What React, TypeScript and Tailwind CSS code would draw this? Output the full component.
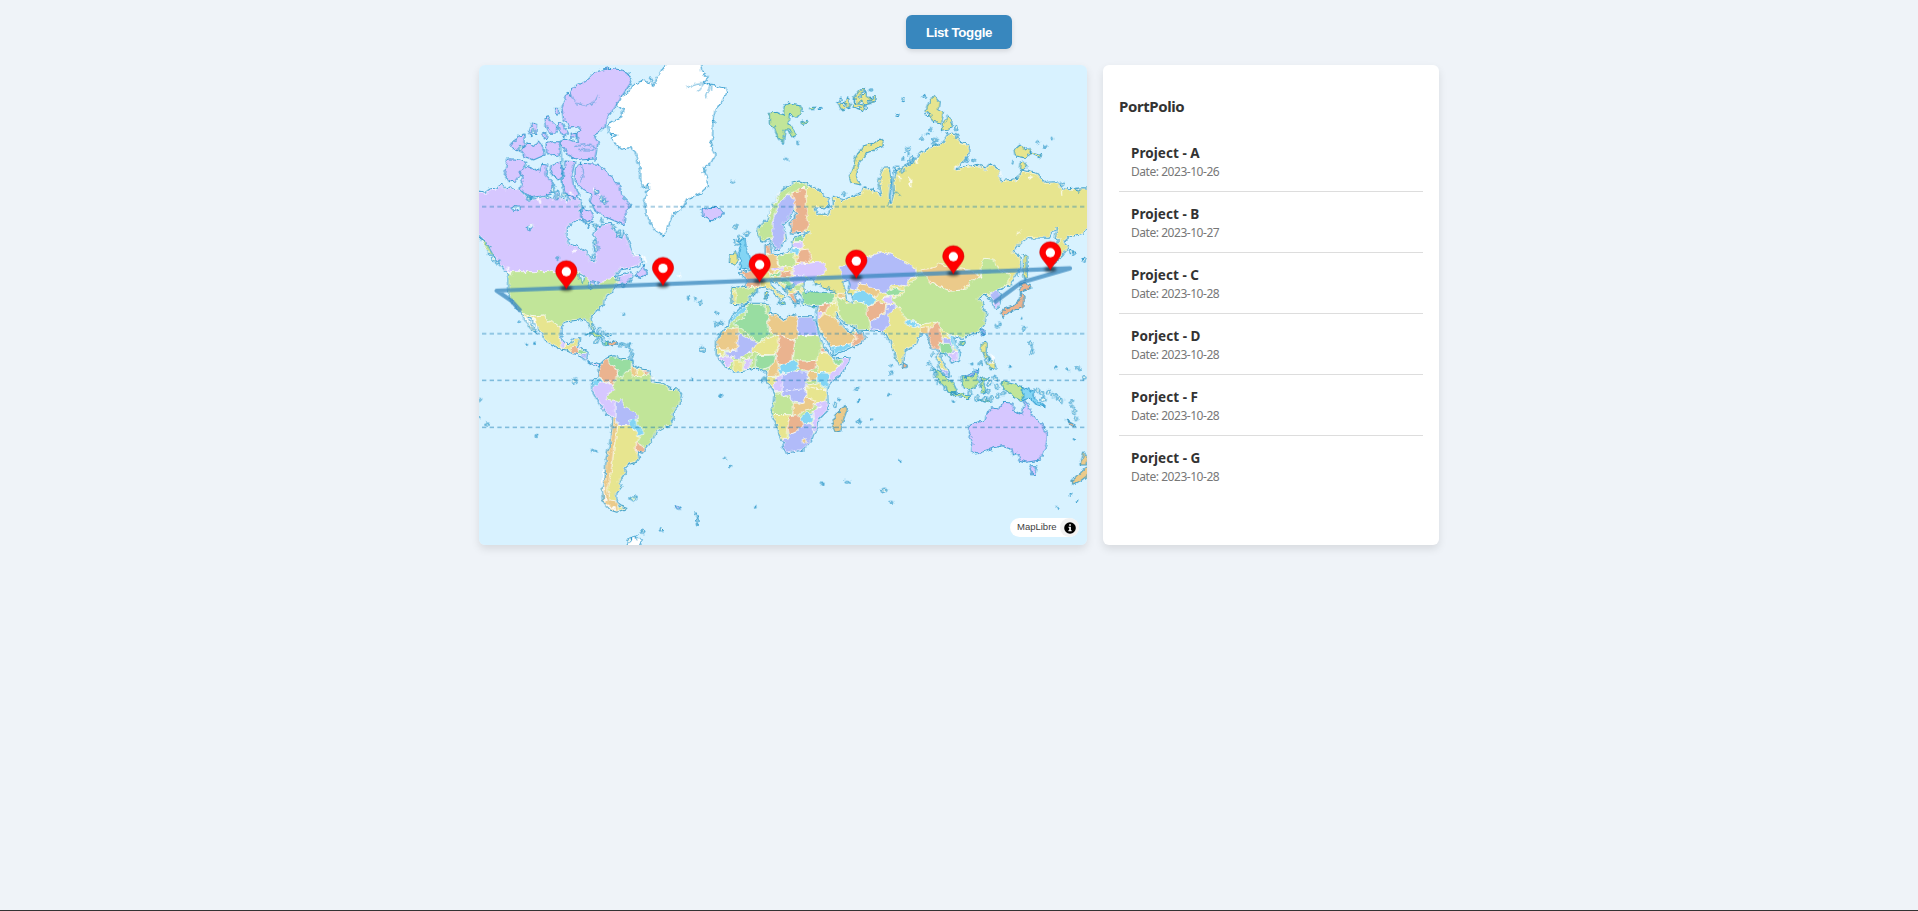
import React from "react";

const C = {
  water: "#D8F2FF",
  coast: "#198EC8",
  purple: "#D6C7FF",
  orange: "#EBCA8A",
  green: "#C1E599",
  yellow: "#E7E58F",
  mint: "#98DDA1",
  cyan: "#83D5F4",
  blue: "#B1BBF9",
  salmon: "#EAB38F",
};

type Shape = [string, string];
type Sheet = { x: number; y: number; shapes: Shape[] };

// Continental outlines, in map units (three units per CSS pixel).
const northAmerica =
  "10,405 45,412 60,402 75,400 95,387 105,402 115,400 120,392 130,403 150,405 160,415 175,430 195,432 215,425 232,425 250,430 262,405 275,430 290,440 300,415 320,425 335,440 330,470 345,490 370,498 355,515 335,492 312,500 292,520 290,545 300,568 325,575 350,590 362,615 372,620 378,595 370,575 378,555 368,540 385,512 420,505 440,535 455,550 462,525 480,570 488,595 510,605 517,622 500,635 478,640 450,645 435,665 462,658 485,650 490,665 470,685 440,690 430,705 428,712 412,720 402,735 400,750 385,765 368,780 362,790 370,815 372,830 362,825 355,805 345,792 325,795 305,798 285,802 273,820 272,840 280,860 300,867 312,848 332,848 328,865 322,877 345,885 354,892 350,912 360,925 378,922 390,928 385,936 365,930 345,918 335,902 305,895 290,885 270,882 240,865 225,858 222,845 205,825 190,802 180,785 172,788 180,805 195,825 203,838 185,825 172,805 160,785 152,770 135,755 120,730 113,705 113,670 115,658 95,635 75,610 60,585 45,560 20,535";
const southAmerica =
  "385,932 400,918 412,908 430,902 455,910 480,912 490,930 515,942 535,945 545,965 545,980 580,985 600,1000 625,1002 637,1020 630,1045 613,1065 612,1090 600,1112 580,1118 560,1130 550,1150 530,1175 520,1195 503,1190 508,1210 500,1222 478,1228 465,1240 470,1252 448,1280 455,1295 440,1315 440,1335 448,1352 470,1360 440,1372 420,1365 400,1340 397,1300 405,1270 408,1210 418,1170 425,1120 428,1088 405,1072 385,1040 365,1005 365,990 370,975 385,965 388,950";
const africa =
  "840,745 890,745 900,755 898,775 915,778 945,795 955,778 985,785 1030,785 1038,802 1045,835 1060,870 1070,885 1092,908 1100,912 1140,905 1135,925 1110,960 1080,985 1072,1005 1075,1065 1045,1095 1043,1122 1030,1140 1025,1155 1000,1185 975,1190 945,1195 935,1155 922,1130 918,1105 905,1080 910,1040 913,1015 890,980 885,970 890,955 875,945 855,940 825,948 795,952 765,935 750,915 738,895 740,850 755,830 775,810 780,790 800,770 815,755 830,748";
const eurasia =
  "868,555 862,520 890,495 900,470 915,440 935,405 965,385 990,378 1015,388 1045,405 1075,430 1080,450 1065,462 1035,458 1045,478 1072,478 1090,450 1088,420 1105,425 1115,440 1140,425 1175,412 1183,392 1192,405 1205,402 1222,412 1235,420 1225,380 1238,340 1260,338 1265,370 1258,420 1262,448 1270,420 1268,380 1278,345 1300,335 1330,320 1350,295 1385,275 1415,265 1435,235 1455,235 1470,262 1495,268 1500,290 1480,320 1455,342 1525,328 1545,342 1560,325 1588,345 1592,378 1645,370 1655,345 1700,355 1725,382 1760,380 1780,402 1840,398 1870,400 1870,510 1840,535 1800,545 1782,560 1795,575 1780,600 1755,625 1742,630 1735,600 1752,575 1768,555 1755,550 1762,520 1745,535 1735,550 1675,548 1650,565 1630,590 1650,605 1652,635 1640,660 1620,690 1600,700 1585,705 1593,720 1590,745 1583,762 1575,760 1568,745 1562,732 1545,720 1525,732 1542,745 1535,755 1550,775 1545,805 1530,830 1500,840 1475,850 1450,845 1462,875 1472,895 1465,915 1448,925 1440,912 1425,895 1410,890 1415,915 1435,945 1440,965 1425,960 1408,940 1400,915 1405,885 1390,885 1380,870 1372,840 1350,840 1340,865 1305,890 1300,925 1288,930 1275,905 1265,870 1255,850 1235,830 1200,827 1165,825 1150,815 1125,808 1110,790 1098,772 1100,788 1115,808 1135,830 1150,828 1158,815 1163,830 1182,832 1185,845 1175,865 1150,875 1120,890 1090,902 1085,885 1070,860 1050,830 1040,802 1040,770 1045,750 1030,752 1000,748 992,720 985,712 975,720 988,750 970,745 958,725 945,705 920,685 905,680 905,692 930,715 945,725 938,735 922,745 930,732 912,715 895,700 885,695 865,700 862,710 840,725 838,740 820,750 785,748 783,695 805,692 828,698 828,670 808,655 835,645 850,635 875,615 885,600 885,570 900,565 905,595 920,600 950,590 965,580 965,560 978,545 1000,540 1015,530 965,535 960,505 980,475 970,465 955,495 940,510 945,530 950,558 940,560 930,585 915,590 905,560 895,550 880,562";

const inlandWater =
  "M1000,695L1005,675 1025,670 1035,690 1050,685 1060,700 1090,705 1095,712 1060,712 1025,710 1005,712Z M1120,680L1135,672 1140,690 1135,710 1150,725 1145,742 1130,735 1125,710Z M325,655L345,665 340,680 330,672Z M355,680L365,678 362,705 356,700Z M370,680L385,685 378,695Z M120,460L145,452 150,465 130,470Z M165,520L190,508 180,525Z";

// Countries drawn inside the continental outlines.
const countries: Sheet[] = [
  {
    x: 0,
    y: 540,
    shapes: [
      [C.green, "100,110 325,110 345,125 370,150 385,150 428,125 440,125 445,150 450,300 350,300 270,275 245,260 235,262 220,240 195,243 155,235 100,180"],
      [C.yellow, "140,235 155,235 195,243 220,240 235,262 245,257 270,277 272,340 335,300 340,330 322,332 305,345 300,370 150,330"],
      [C.salmon, "305,338 318,332 325,352 312,362 300,352"],
      [C.mint, "322,345 345,340 360,352 335,358 322,355"],
      [C.blue, "330,358 356,350 352,382 338,378"],
      [C.salmon, "385,392 412,367 418,372 425,392 443,405 440,428 430,450 410,440 385,428 382,405"],
      [C.mint, "412,367 428,358 455,362 490,370 487,390 482,405 465,412 458,430 445,425 443,405 425,392"],
      [C.orange, "485,385 500,405 503,425 490,425 482,405"],
      [C.yellow, "500,400 522,400 522,420 503,425"],
      [C.salmon, "522,402 540,405 532,422 522,420"],
      [C.cyan, "360,440 385,428 398,438 385,455 370,462 360,455"],
    ],
  },
  {
    x: 0,
    y: 990,
    shapes: [
      [C.purple, "355,15 398,-12 430,0 430,15 408,30 412,45 435,50 435,95 428,100 400,90"],
      [C.blue, "435,55 455,43 462,62 490,80 502,95 500,108 475,118 445,122 435,95"],
      [C.cyan, "478,105 498,103 500,122 518,130 518,148 500,155 498,135 475,122"],
      [C.yellow, "445,122 475,120 500,138 500,155 512,155 500,175 500,200 520,240 480,400 450,380 420,345 410,310 425,250 432,180 440,140"],
      [C.orange, "425,95 438,98 442,130 432,180 425,250 412,310 420,345 440,348 445,378 440,390 390,380 390,200"],
      [C.salmon, "500,172 528,190 520,210 498,203"],
    ],
  },
  {
    x: 600,
    y: 540,
    shapes: [
      [C.cyan, "195,225 228,205 228,225 190,255 175,275 155,300 135,308 150,285"],
      [C.mint, "230,205 285,203 285,225 295,240 298,300 265,322 190,265 228,240"],
      [C.green, "285,200 305,200 302,238 295,245 285,228"],
      [C.orange, "295,240 312,233 345,255 360,235 382,240 382,318 325,298 298,290"],
      [C.blue, "382,240 440,240 448,302 382,302"],
      [C.orange, "135,315 160,285 203,278 203,345 150,345 138,340"],
      [C.blue, "203,290 260,325 260,345 235,350 210,375 170,360 168,348 203,345"],
      [C.yellow, "260,325 325,298 328,330 312,360 270,358 245,350"],
      [C.salmon, "325,298 375,318 368,375 340,390 320,385 315,360 328,335"],
      [C.green, "382,302 450,302 460,335 445,375 400,380 370,370 375,318"],
      [C.yellow, "135,340 165,348 165,360 140,362"],
      [C.purple, "145,365 185,362 190,380 170,395"],
      [C.yellow, "190,378 218,378 218,410 192,410"],
      [C.green, "210,370 235,350 247,358 235,372"],
      [C.purple, "222,375 245,370 240,405 222,405"],
      [C.mint, "258,362 315,360 318,375 300,395 275,405 255,398"],
      [C.orange, "318,368 328,400 325,420 290,422 300,395"],
      [C.cyan, "325,395 365,375 390,395 370,410 330,418"],
      [C.salmon, "382,378 440,378 435,400 415,412 390,400"],
      [C.salmon, "450,330 485,362 475,352 452,350"],
      [C.yellow, "452,352 480,355 490,375 510,390 480,415 450,412 436,385"],
      [C.mint, "488,370 520,372 515,388 498,388"],
      [C.purple, "520,372 545,360 540,400 480,450 478,415 510,392"],
      [C.cyan, "440,412 478,415 476,465 440,440"],
      [C.orange, "415,412 440,412 440,430 415,440"],
      [C.blue, "335,420 370,408 412,412 410,470 408,500 370,500 365,480 335,470"],
      [C.purple, "320,425 340,418 335,470 312,470 308,445"],
      [C.yellow, "285,425 320,425 308,460 290,445"],
      [C.yellow, "410,450 440,445 470,465 475,500 435,508 410,480"],
    ],
  },
  {
    x: 600,
    y: 990,
    shapes: [
      [C.green, "308,22 335,25 340,35 362,30 365,55 378,58 365,90 305,90 300,60"],
      [C.blue, "335,20 408,10 408,40 400,55 365,50 362,30 340,35"],
      [C.yellow, "410,5 470,15 470,52 435,55 410,38"],
      [C.purple, "435,55 480,45 480,85 445,140 430,140 428,80 445,75"],
      [C.orange, "370,58 402,55 405,38 435,45 430,70 405,75 385,92 368,88"],
      [C.cyan, "388,98 408,80 428,85 425,112 402,118"],
      [C.salmon, "358,95 385,92 402,118 380,140 358,150 352,125"],
      [C.yellow, "300,88 370,90 355,100 352,165 325,165 315,115"],
      [C.blue, "330,163 352,163 358,150 380,140 402,118 425,115 432,160 400,210 340,215"],
      [C.orange, "395,165 405,160 410,168 400,175"],
    ],
  },
  {
    x: 600,
    y: 0,
    shapes: [
      [C.green, "250,570 260,510 320,400 390,370 420,385 415,400 385,402 365,410 345,425 325,450 310,490 310,545 290,570"],
      [C.blue, "345,425 362,418 375,440 372,465 358,490 340,512 345,530 335,585 315,592 305,560 310,490 325,450"],
      [C.salmon, "365,412 385,412 392,400 408,402 410,480 418,510 400,535 360,538 360,490 380,470"],
      [C.mint, "370,542 400,540 400,560 375,560"],
      [C.purple, "360,565 398,560 400,580 365,580"],
    ],
  },
  {
    x: 600,
    y: 540,
    shapes: [
      [C.cyan, "362,42 390,40 385,58 362,55"],
      [C.salmon, "390,45 415,42 425,68 410,85 378,82"],
      [C.green, "322,60 372,52 378,90 365,98 325,92"],
      [C.orange, "280,65 305,55 320,62 322,95 308,118 285,112 280,90"],
      [C.salmon, "280,20 308,20 305,55 285,55"],
      [C.purple, "370,90 410,85 455,80 470,98 462,118 440,125 430,145 410,125 368,120"],
      [C.purple, "308,98 345,95 335,108 308,105"],
      [C.mint, "300,118 335,110 332,125 305,125"],
      [C.salmon, "330,112 365,108 365,120 335,128"],
      [C.blue, "360,125 400,118 408,140 375,150 360,140"],
      [C.green, "370,150 400,150 395,165 372,170"],
      [C.mint, "335,130 360,135 370,160 350,165 345,148 325,140"],
      [C.salmon, "200,105 262,82 285,112 270,125 278,150 228,162 230,130"],
      [C.green, "180,148 225,152 262,165 235,215 195,215 180,210"],
      [C.yellow, "182,165 200,165 196,210 180,210"],
      [C.yellow, "270,138 305,132 355,190 320,210 300,165 270,155"],
      [C.salmon, "355,178 385,172 395,215 370,210"],
      [C.mint, "395,168 450,168 490,175 495,200 445,210 395,210"],
      [C.salmon, "445,210 480,205 470,232 445,235"],
      [C.purple, "436,230 458,235 442,262 436,250"],
      [C.yellow, "480,205 500,205 515,245 505,258 475,245 465,232"],
      [C.orange, "440,258 465,235 505,258 530,285 558,305 545,325 505,335 480,335 470,318"],
      [C.cyan, "482,338 545,325 540,345 490,365"],
      [C.salmon, "553,290 595,290 570,340 545,335 558,308"],
      [C.green, "497,188 515,192 530,205 560,200 590,205 595,240 605,290 555,285 525,270 510,245"],
      [C.orange, "500,175 520,175 525,192 505,188"],
      [C.blue, "510,95 540,88 570,78 570,70 640,50 680,65 740,105 735,125 715,135 705,155 665,150 650,180 625,165 565,145 560,168 535,160 515,125"],
      [C.orange, "562,145 590,150 630,170 620,190 590,178 562,162"],
      [C.cyan, "550,175 580,165 620,195 600,212 570,200 550,198"],
      [C.salmon, "590,215 625,200 650,205 645,230 605,260 592,245"],
      [C.blue, "600,262 645,235 655,208 680,210 680,235 650,290 605,290"],
      [C.mint, "645,172 670,158 702,165 685,180 650,185"],
      [C.purple, "635,188 665,185 675,200 650,208"],
    ],
  },
  {
    x: 1200,
    y: 540,
    shapes: [
      [C.green, "135,120 165,110 185,145 245,168 290,162 300,135 335,125 330,105 340,70 370,72 385,105 420,118 415,145 385,165 365,185 345,175 360,300 240,310 210,280 200,265 170,275 110,260 85,220 65,190 100,178 105,155 140,130"],
      [C.orange, "150,105 185,100 210,85 240,98 300,105 335,125 300,140 275,165 240,168 185,145 165,120"],
      [C.yellow, "70,220 90,220 105,250 150,270 185,262 200,262 195,290 175,295 155,310 110,345 95,400 60,400 30,290 60,270 55,245"],
      [C.cyan, "103,255 120,255 150,272 130,278 108,268"],
      [C.orange, "152,278 175,275 172,310 155,305"],
      [C.salmon, "180,280 205,262 210,290 220,310 210,345 212,370 200,345 182,345 172,305"],
      [C.blue, "218,305 240,312 258,355 245,352 220,325"],
      [C.mint, "208,325 235,325 252,345 235,362 212,365"],
      [C.purple, "235,355 262,352 262,395 235,395"],
      [C.cyan, "235,300 265,305 280,350 270,395 260,380 262,350 245,322"],
      [C.blue, "215,400 245,415 245,435 222,430"],
      [C.blue, "360,175 395,160 398,195 372,205 362,192"],
      [C.purple, "370,203 398,196 395,230 368,228"],
    ],
  },
];

// Separate islands, each with its own coastline.
const islands: Sheet[] = [
  {
    x: 0,
    y: 0,
    shapes: [
      [C.purple, "345,80 360,68 375,50 420,40 455,45 478,60 485,80 465,110 445,140 430,165 410,190 405,215 388,232 372,240 385,262 380,282 375,312 330,315 300,305 285,285 272,265 280,250 300,255 325,262 320,235 335,225 325,215 298,220 280,190 275,160 285,125 292,115 305,125 302,105 320,90"],
      [C.purple, "222,190 235,185 245,200 262,215 258,235 240,235 225,212"],
      [C.purple, "262,205 278,205 295,235 280,245 268,228"],
      [C.purple, "175,225 190,205 203,208 200,235 182,242"],
      [C.purple, "120,275 145,242 165,240 165,262 150,290"],
      [C.purple, "150,285 175,262 190,275 205,258 222,280 225,300 190,315 165,305"],
      [C.purple, "228,268 245,260 268,260 268,300 248,302 230,290"],
      [C.purple, "112,312 135,312 170,322 160,345 135,378 118,380 103,360"],
      [C.purple, "150,350 175,335 205,348 215,328 230,330 228,360 250,385 250,410 225,420 180,428 150,400 158,380"],
      [C.purple, "245,330 270,320 280,345 270,375 245,360 240,345"],
      [C.purple, "285,318 315,320 305,360 310,390 330,420 315,430 285,415 278,380"],
      [C.purple, "330,325 385,328 410,350 430,370 450,395 455,420 482,450 465,480 462,510 440,500 405,485 380,470 360,440 365,420 340,405 315,380 315,345"],
      [C.purple, "255,160 265,160 265,178 255,172"],
      [C.purple, "303,238 318,235 318,248 305,250"],
      [C.purple, "218,235 230,235 230,252 220,248"],
      [C.purple, "335,460 360,465 370,490 350,502 332,485"],
      ["#FFFFFF", "560,70 575,45 600,20 690,20 695,48 715,65 700,82 740,95 765,98 772,110 755,140 735,165 728,200 728,240 722,275 735,300 722,325 700,340 710,370 712,395 690,415 650,435 640,455 610,475 600,500 590,530 580,543 560,530 545,510 530,480 523,440 528,415 538,405 538,385 520,400 512,375 512,345 503,320 495,290 480,278 455,283 440,270 425,250 440,240 418,238 412,210 455,185 458,165 442,150 450,125 480,110 485,92 520,75 535,85 540,68 552,92"],
    ],
  },
  {
    x: 600,
    y: 0,
    shapes: [
      [C.green, "298,175 320,172 340,180 342,155 360,148 390,152 397,170 378,190 358,180 355,200 380,235 370,250 355,225 345,225 340,265 322,245 312,215 298,205"],
      [C.purple, "95,460 110,465 120,457 150,458 160,472 148,488 125,497 100,485"],
      [C.yellow, "500,142 520,148 535,125 540,155 515,165"],
      [C.yellow, "550,130 570,105 585,100 590,125 618,130 610,145 585,150 575,168 550,155"],
      [C.yellow, "630,252 610,265 580,272 555,310 550,340 535,365 545,385 572,390 560,365 565,330 590,295 640,275 638,258"],
      [C.green, "420,158 435,156 430,164 418,164"],
      [C.green, "392,204 412,196 414,202 395,210"],
    ],
  },
  {
    x: 1200,
    y: 0,
    shapes: [
      [C.yellow, "175,145 192,118 208,138 205,160 220,170 215,205 188,198 180,178 168,165"],
      [C.yellow, "232,183 250,205 245,220 212,227"],
      [C.yellow, "432,285 450,270 460,282 475,278 485,295 465,308 435,302"],
      [C.yellow, "485,290 515,300 508,308 488,298"],
      [C.yellow, "450,322 460,318 472,335 460,345 448,340"],
      [C.yellow, "0,128 15,122 18,135 2,142"],
    ],
  },
  {
    x: 600,
    y: 540,
    shapes: [
      [C.cyan, "205,15 225,10 228,35 240,75 235,98 205,105 215,80 205,60 212,40"],
      [C.yellow, "180,62 200,50 203,75 195,88 178,85"],
      [C.yellow, "285,172 294,172 294,192 285,192"],
      [C.green, "328,205 345,200 345,210 335,212"],
      [C.mint, "425,215 440,212 432,222"],
    ],
  },
  {
    x: 0,
    y: 540,
    shapes: [
      [C.purple, "510,105 520,90 532,118 515,128 495,122"],
      [C.green, "345,300 375,290 400,305 392,312 368,300"],
      [C.salmon, "415,325 430,318 440,325 430,332 418,332"],
      [C.mint, "400,322 415,318 416,330 402,332"],
      [C.green, "30,10 48,20 68,55 75,75 65,70 50,45"],
    ],
  },
  {
    x: 600,
    y: 990,
    shapes: [[C.orange, "525,58 532,72 520,105 512,138 495,142 488,125 495,90 510,78"]],
  },
  {
    x: 1200,
    y: 540,
    shapes: [
      [C.salmon, "452,145 480,148 485,158 465,165 452,172 448,160"],
      [C.salmon, "452,172 462,185 458,220 435,225 420,232 398,248 392,232 405,220 430,212 448,195"],
      [C.yellow, "460,58 470,62 472,120 465,140 460,110"],
      [C.blue, "335,285 345,285 342,302 334,300"],
      [C.green, "270,320 285,318 278,332 270,330"],
      [C.salmon, "102,380 112,392 105,402 98,395"],
      [C.yellow, "335,325 350,322 348,355 362,375 350,372 335,350"],
      [C.yellow, "350,385 372,375 378,400 362,405"],
      [C.green, "190,402 215,415 250,445 262,470 240,478 215,450 200,425"],
      [C.green, "272,425 300,425 320,410 325,440 310,465 280,460"],
      [C.blue, "280,430 325,400 325,410 300,425"],
      [C.green, "330,430 360,428 340,440 350,470 335,478"],
      [C.green, "395,440 420,445 458,455 458,500 430,485 400,460"],
      [C.cyan, "458,455 490,470 490,485 525,515 500,510 480,490 458,495"],
    ],
  },
  {
    x: 1200,
    y: 990,
    shapes: [
      [C.purple, "298,120 345,105 350,85 365,68 385,72 400,52 432,55 430,75 455,90 465,45 478,70 490,95 515,115 532,150 530,175 510,225 470,232 450,225 442,205 430,210 425,190 400,182 370,188 350,198 320,207 305,200 308,175 295,145"],
      [C.purple, "478,242 500,242 495,268 485,270"],
      [C.green, "240,22 300,30 300,38 260,35"],
      [C.green, "325,42 350,40 365,48 345,52"],
      [C.orange, "642,200 655,225 650,240 630,240"],
      [C.orange, "665,240 645,250 620,275 605,288 615,298 635,285 665,262"],
      [C.salmon, "590,105 618,120 610,125 592,112"],
    ],
  },
  {
    x: 0,
    y: 990,
    shapes: [
      ["#E4F6D8", "478,340 490,333 502,338 490,348"],
      [C.purple, "612,360 622,362 634,372 622,372"],
      ["#FFFFFF", "470,475 480,460 505,450 495,462 518,465 510,485 480,490"],
    ],
  },
];

// Islets too small to carry a fill: [x, y, radius].
const islets: [number, number, number][] = [
  [788, 380, 6], [949, 314, 5], [984, 264, 5], [1052, 160, 4], [1203, 105, 5], [957, 143, 6], [797, 513, 6], [831, 535, 7], [812, 550, 8], [800, 562, 8],
  [1300, 134, 6], [1284, 180, 6], [1364, 125, 6], [1382, 222, 4], [1356, 250, 6], [1372, 237, 3], [1315, 281, 6], [1314, 295, 5], [1299, 311, 4], [1395, 255, 7], [1390, 265, 6], [1459, 220, 7], [1461, 245, 5], [1372, 178, 6],
  [1492, 317, 6], [1511, 316, 4], [1703, 261, 5], [1726, 274, 4], [1747, 250, 4], [1627, 322, 5], [1776, 386, 6], [1823, 406, 7], [1122, 415, 6],
  [1112, 135, 6], [1125, 150, 6], [1135, 160, 5], [1155, 140, 6], [1170, 125, 6], [1180, 112, 6], [1172, 145, 6], [1185, 158, 6], [1200, 140, 5], [1165, 160, 6],
  [1318, 322, 6], [1330, 318, 5], [1325, 310, 6], [1280, 338, 7], [1298, 348, 6], [1275, 350, 6],
  [265, 610, 4], [460, 778, 4], [170, 868, 3], [193, 865, 3], [312, 978, 8], [148, 800, 3], [655, 728, 4], [675, 732, 5], [690, 742, 5], [739, 774, 5], [735, 806, 6], [745, 808, 5], [755, 804, 5], [697, 882, 8],
  [666, 971, 2], [880, 975, 5], [1161, 1003, 5], [1106, 1032, 3], [1095, 1050, 7], [1165, 1037, 3], [1163, 1102, 5], [1171, 1097, 4], [1206, 1094, 3],
  [754, 1023, 3], [766, 1210, 4], [779, 1234, 4], [1057, 1285, 4], [1130, 1280, 5], [1138, 1282, 4], [856, 1356, 3], [677, 1375, 4], [682, 1385, 4], [684, 1396, 5], [681, 1408, 4],
  [201, 1141, 3], [368, 1186, 4], [378, 1185, 3], [30, 1035, 5], [30, 1087, 4], [50, 1108, 6], [519, 1429, 7], [574, 1423, 6], [478, 1455, 8],
  [1258, 1020, 4], [1450, 1038, 4], [1288, 1216, 3], [1241, 1306, 8], [1264, 1342, 4], [1761, 1357, 3], [1803, 1320, 4], [1820, 1337, 4], [1813, 1153, 3],
  [1803, 590, 7], [1811, 596, 5], [1842, 614, 6], [1580, 815, 5], [1588, 806, 5], [1662, 820, 6], [1653, 790, 3], [1682, 865, 6], [1687, 878, 5], [1684, 892, 6], [1757, 938, 4], [1792, 945, 4], [1821, 938, 6], [1830, 945, 5], [1842, 967, 7], [1618, 934, 3], [1262, 930, 3], [1264, 955, 5], [1259, 1018, 4],
  [370, 815, 6], [385, 825, 6], [400, 833, 6], [415, 840, 6], [395, 850, 6], [380, 858, 7], [452, 868, 6], [465, 870, 5], [478, 874, 5], [483, 888, 6], [486, 902, 6], [482, 916, 5], [460, 690, 7], [475, 680, 6], [445, 672, 6],
  [1505, 926, 4], [1512, 950, 5], [1385, 900, 6], [1378, 925, 6], [1385, 942, 6], [1395, 960, 7], [1405, 980, 6], [1425, 1000, 6], [1500, 1015, 7], [1520, 1028, 7], [1545, 1032, 7], [1565, 1028, 7], [1585, 1022, 7], [1600, 1015, 6], [1560, 985, 7], [1575, 970, 7], [1580, 995, 7], [1555, 1010, 6],
  [1700, 1005, 7], [1715, 1015, 7], [1720, 1032, 8], [1735, 1010, 7], [1750, 1020, 7], [1765, 1030, 7], [1775, 1038, 7], [1803, 1040, 6], [1808, 1055, 6], [1812, 1070, 6], [1818, 1090, 7], [1550, 915, 7], [1530, 925, 6],
  [190, 230, 7], [150, 280, 7], [175, 430, 6], [235, 425, 7], [250, 405, 7], [262, 425, 6], [285, 420, 7], [380, 410, 7], [395, 432, 8], [405, 440, 7], [355, 505, 7], [375, 515, 6], [395, 497, 6], [445, 535, 8], [430, 515, 6],
  [375, 560, 6], [380, 580, 7], [368, 605, 7], [445, 540, 7], [60, 600, 6], [70, 612, 7], [82, 622, 6],
  [850, 715, 5], [862, 708, 5], [970, 690, 5], [960, 700, 5], [985, 740, 6], [975, 748, 5], [950, 700, 5], [890, 725, 5], [730, 200, 5], [725, 265, 6], [703, 345, 6], [527, 395, 6],
];

// Pale flecks along fretted coasts.
const flecks =
  "M185,222l8,6M145,280l6,8M205,428l6,16M300,412l8,6M370,400l6,12M390,420l8,8M180,515l10,-6M1318,320l8,-4M1340,310l4,12M1320,370l2,24M1285,365l8,8M1590,348l2,14M1775,405l2,14M1680,368l6,-2M35,560l14,22M55,590l12,16M112,640l12,18M400,1245l-2,40M402,1300l6,40M412,1350l24,14M310,590l6,-4M930,410l-16,36M905,460l-8,24M190,790l10,26M165,785l14,24M545,965l4,16M625,660l4,4M488,590l14,14M520,600l8,20M1045,1060l8,-6M1555,920l12,4M1565,900l6,18M1455,340l10,-8M1640,535l10,-6";

const pins: [number, number][] = [
  [289, 702], [579, 692], [869, 681], [1159, 670], [1450, 657], [1741, 645],
];

const projects = [
  { name: "Project - A", date: "2023-10-26" },
  { name: "Project - B", date: "2023-10-27" },
  { name: "Project - C", date: "2023-10-28" },
  { name: "Porject - D", date: "2023-10-28" },
  { name: "Porject - F", date: "2023-10-28" },
  { name: "Porject - G", date: "2023-10-28" },
];

const continents: Shape[] = [
  [C.purple, northAmerica],
  [C.green, southAmerica],
  [C.green, africa],
  [C.yellow, eurasia],
];

function WorldMap() {
  return (
    <svg viewBox="27 30 1824 1440" className="block h-full w-full" role="img" aria-label="World map">
      <defs>
        <clipPath id="land">
          {continents.map(([, p], i) => (
            <polygon key={i} points={p} />
          ))}
        </clipPath>
        <filter id="ragged" filterUnits="userSpaceOnUse" x="0" y="0" width="1880" height="1500" colorInterpolationFilters="sRGB">
          <feTurbulence type="fractalNoise" baseFrequency="0.07" numOctaves="2" seed="4" result="n" />
          <feDisplacementMap in="SourceGraphic" in2="n" scale="16" xChannelSelector="R" yChannelSelector="G" />
        </filter>
        <filter id="pinShadow" x="-1" y="-1" width="3" height="3">
          <feGaussianBlur stdDeviation="4" />
        </filter>
      </defs>
      <rect x="0" y="0" width="1900" height="1500" fill={C.water} />
      <g filter="url(#ragged)" strokeLinejoin="round">
        {continents.map(([fill, p], i) => (
          <polygon key={i} points={p} fill={fill} />
        ))}
        <g clipPath="url(#land)">
          {countries.map((s, i) => (
            <g key={i} transform={`translate(${s.x} ${s.y})`}>
              {s.shapes.map(([fill, p], j) => (
                <polygon key={j} points={p} fill={fill} stroke="#fff" strokeOpacity=".75" strokeWidth="3" />
              ))}
            </g>
          ))}
          {continents.map(([, p], i) => (
            <polygon key={i} points={p} fill="none" stroke="#fff" strokeOpacity=".7" strokeWidth="8" />
          ))}
        </g>
        <path d={inlandWater} fill={C.water} stroke={C.coast} strokeOpacity=".75" strokeWidth="3" />
        {continents.map(([, p], i) => (
          <polygon key={i} points={p} fill="none" stroke={C.coast} strokeOpacity=".8" strokeWidth="3.2" />
        ))}
        {islands.map((s, i) => (
          <g key={i} transform={`translate(${s.x} ${s.y})`}>
            {s.shapes.map(([fill, p], j) => (
              <polygon key={j} points={p} fill={fill} stroke={C.coast} strokeOpacity=".8" strokeWidth="3.2" />
            ))}
          </g>
        ))}
        <path d={flecks} fill="none" stroke="#fff" strokeWidth="5" strokeLinecap="round" />
        <g fill="#eef9f4" stroke={C.coast} strokeOpacity=".9" strokeWidth="3">
          {islets.map(([x, y, r], i) => (
            <ellipse key={i} cx={x} cy={y} rx={r} ry={r * 0.65} transform={`rotate(${(i * 47) % 180} ${x} ${y})`} />
          ))}
        </g>
        <g fill="none" stroke={C.coast} strokeOpacity=".7" strokeWidth="3">
          <path d="M305,125 320,145 350,152 375,140 385,120M315,275 345,268 375,275 370,285 325,283M272,255 275,310 278,400M335,330 340,360 332,385M650,98 680,88 702,85 685,108M702,82 720,90 706,130M725,85 725,105M1260,340 1265,400 1255,452M1270,415 1285,415 1288,425" />
        </g>
      </g>
      <g stroke="#1077B0" strokeOpacity=".7" strokeWidth="3" strokeDasharray="13 10">
        <path d="M36 455H1851M36 836H1851M36 976H1851M36 1117H1851" />
      </g>
      <path
        d="M152,768 125,738 80,707 1800,640 1655,682 1572,743"
        fill="none"
        stroke="#3887be"
        strokeOpacity=".75"
        strokeWidth="12.5"
        strokeLinejoin="round"
      />
      {pins.map(([x, y], i) => (
        <g key={i} transform={`translate(${x} ${y})`}>
          <ellipse cx="0" cy="-2" rx="18" ry="8" fill="#000" fillOpacity=".6" filter="url(#pinShadow)" />
          <path d="M0 0C-7-16-32-35-32-53A32 32 0 0 1 32-53C32-35 7-16 0 0Z" fill="#f00" stroke="#c00000" strokeWidth="1.5" />
          <circle cx="0" cy="-52" r="14" fill="#fff" />
        </g>
      ))}
    </svg>
  );
}

export default function App() {
  return (
    <div className="flex h-[911px] flex-col items-center overflow-hidden border-b border-[#333] bg-[#eff3f8] pt-[15px] font-['Noto_Sans',sans-serif]">
      <button className="h-[34px] w-[106px] shrink-0 rounded-[6px] bg-[#3887be] pt-px font-['Liberation_Sans',sans-serif] text-[13.33px] font-bold tracking-[-0.35px] text-white shadow-[0_2px_5px_rgba(0,0,0,0.12)]">
        List Toggle
      </button>
      <main className="mt-4 flex h-[480px] w-[960px] shrink-0 gap-4">
        <section className="relative w-[608px] overflow-hidden rounded-[6px] shadow-[0_4px_8px_rgba(0,0,0,0.1)]">
          <WorldMap />
          <div className="absolute right-2 bottom-2 flex h-[19px] w-[69px] items-center justify-between rounded-full bg-white pl-[7px] font-['Liberation_Sans',sans-serif] text-[9.5px] text-[#404040]">
            <span>MapLibre</span>
            <span className="flex h-[19px] w-[19px] items-center justify-center rounded-full bg-[#f2f2f2]">
              <svg viewBox="0 0 12 12" className="h-3 w-3">
                <circle cx="6" cy="6" r="5.8" fill="#000" />
                <path d="M5.2 2.2h1.7v1.5H5.2zM4.5 4.8h2.4v3.5h.8v1H4.3v-1h.9V5.8h-.7z" fill="#fff" />
              </svg>
            </span>
          </div>
        </section>
        <aside className="w-[336px] rounded-[6px] bg-white px-4 pt-[30px] shadow-[0_4px_8px_rgba(0,0,0,0.1)]">
          <h3 className="h-[36px] text-[15px] leading-[22px] font-bold tracking-[-0.4px] text-[#333]">PortPolio</h3>
          <ul>
            {projects.map((p) => (
              <li key={p.name} className="h-[61px] border-b border-[#ddd] px-3 pt-[12px] last:border-b-0">
                <div className="text-[13.5px] leading-[20px] font-bold tracking-[0.05px] text-[#333]">{p.name}</div>
                <div className="text-[12px] leading-[17px] tracking-[-0.46px] text-[#777]">Date: {p.date}</div>
              </li>
            ))}
          </ul>
        </aside>
      </main>
    </div>
  );
}
